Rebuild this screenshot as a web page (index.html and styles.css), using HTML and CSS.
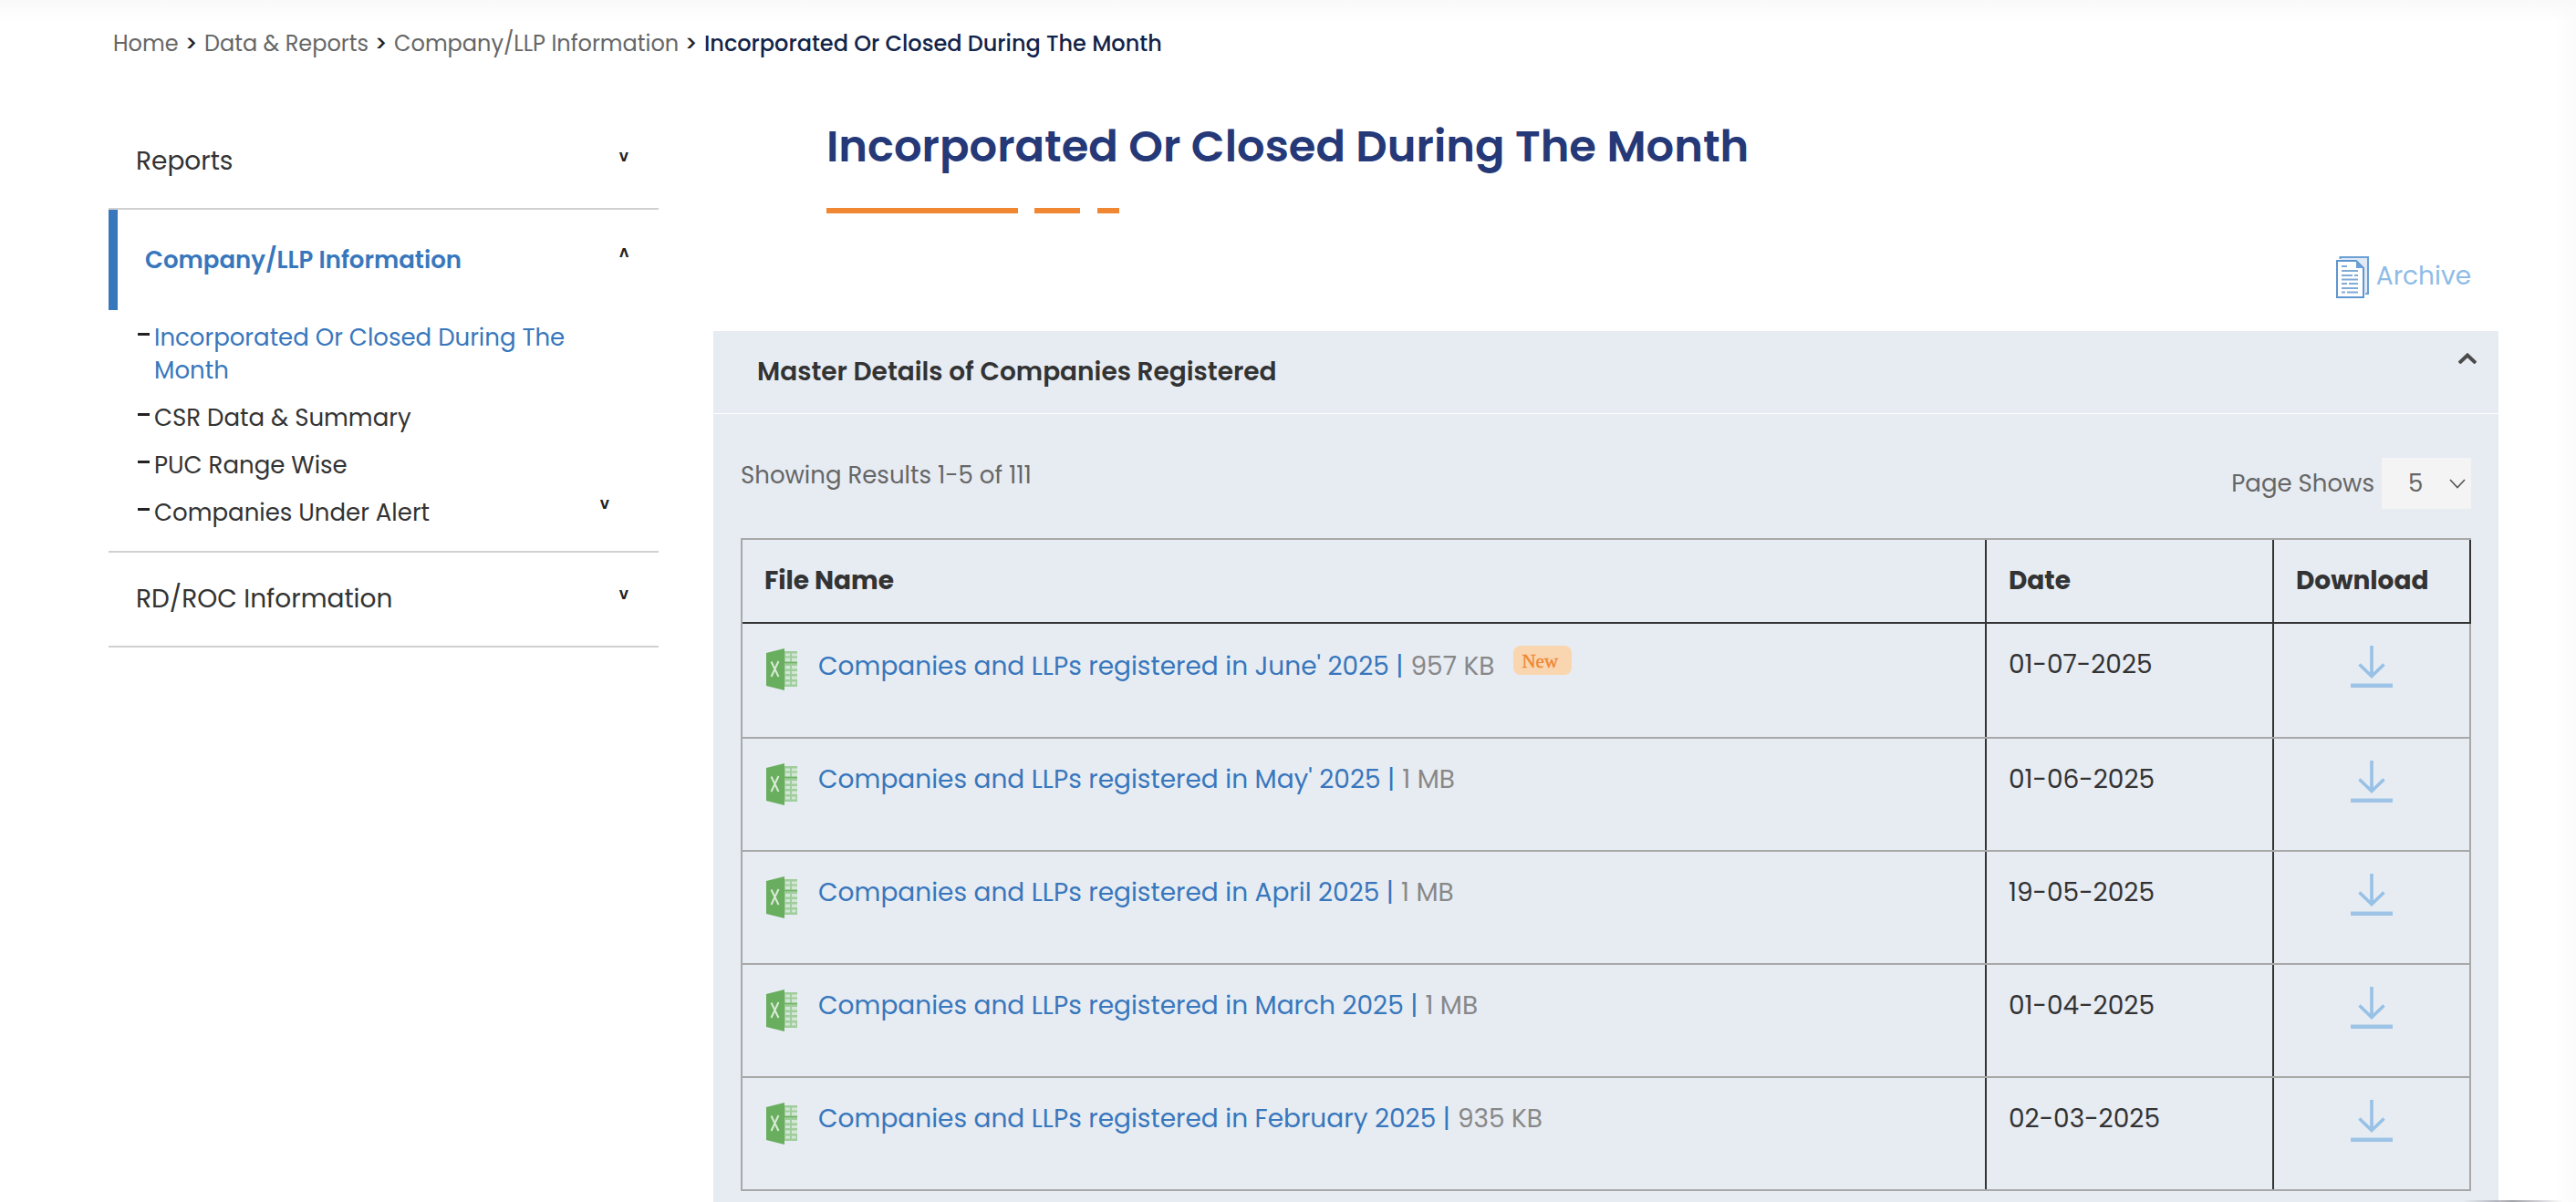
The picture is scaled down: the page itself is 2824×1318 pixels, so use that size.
FILE: index.html
```html
<!DOCTYPE html>
<html lang="en">
<head>
<meta charset="utf-8">
<title>Incorporated Or Closed During The Month</title>
<link rel="stylesheet" href="styles.css">
</head>
<body>
<svg class="sprite" width="0" height="0" aria-hidden="true">
  <symbol id="excel" viewBox="0 0 34 48">
    <path d="M20 4H34V43H20Z" fill="#9fcd9b"/>
    <path d="M21 6.500h5v3h-5zM28 6.500h6v3h-6zM21 11.500h5v4h-5zM28 11.500h6v4h-6zM21 20h5v3.500h-5zM28 20h6v3.500h-6zM21 26h5v3h-5zM28 26h6v3h-6zM21 31.500h5v3.500h-5zM28 31.500h6v3.500h-6zM21 37.500h5v3h-5zM28 37.500h4.500v3H28z" fill="#d3e5d6"/>
    <path d="M20 16.500H34" stroke="#6fb165" stroke-width="1.500"/>
    <path d="M0 6L20 1V47L0 42Z" fill="#69ae5e"/>
    <path d="M5.500 15.500L13.500 32M13.500 15L5.500 32" stroke="#d9ead8" stroke-width="2" fill="none"/>
  </symbol>
  <symbol id="download" viewBox="0 0 46 46">
    <path d="M23 0V34M9.500 20.500L23 33.500L36.500 20.500" stroke="#98c1e6" stroke-width="3.600" fill="none"/>
    <path d="M0 43.800H46" stroke="#9dc3e6" stroke-width="4.400"/>
  </symbol>
</svg>
<nav class="breadcrumb">
  <a class="bc-home">Home</a><i>&gt;</i><a class="bc-data">Data &amp; Reports</a><i>&gt;</i><a class="bc-company">Company/LLP Information</a><i>&gt;</i><strong>Incorporated Or Closed During The Month</strong>
</nav>
<div class="layout">
  <aside class="sidebar">
    <div class="group reports"><span>Reports</span><b class="caret">v</b></div>
    <div class="group active"><span>Company/LLP Information</span><b class="caret up">v</b></div>
    <ul class="submenu">
      <li class="current"><span>Incorporated Or Closed During The Month</span></li>
      <li><span>CSR Data &amp; Summary</span></li>
      <li><span>PUC Range Wise</span></li>
      <li><span>Companies Under Alert</span><b class="caret">v</b></li>
    </ul>
    <div class="group rd"><span>RD/ROC Information</span><b class="caret">v</b></div>
  </aside>
  <main class="content">
    <h1>Incorporated Or Closed During The Month</h1>
    <div class="rule"><i></i><i></i><i></i></div>
    <div class="archive">
      <svg width="36" height="46" viewBox="0 0 36 46">
        <path d="M4.500 3V1H35V41H32" stroke="#6c9fd3" stroke-width="2" fill="#dfeaf6"/>
        <path d="M1 5H22L30 13V45H1Z" stroke="#5f96ce" stroke-width="2" fill="#fff"/>
        <path d="M22 5V13H30Z" fill="#6c9fd3"/>
        <path d="M6 11H12M6 16H24M6 21H18M20 21H24M6 25.500H24M6 30H12M14 30H24M6 35H24M6 39.500H10M12 39.500H24" stroke="#82aad7" stroke-width="2.200"/>
      </svg>
      <span>Archive</span>
    </div>
    <section class="panel">
      <header class="panel-head">
        <h2>Master Details of Companies Registered</h2>
        <svg width="20" height="12" viewBox="0 0 20 12"><path d="M1 11L10 2.500L19 11" stroke="#4b4b4b" stroke-width="4" fill="none"/></svg>
      </header>
      <div class="toolbar">
        <span class="results">Showing Results 1-5 of 111</span>
        <label class="pager"><span>Page Shows</span>
          <span class="select">5<svg width="18" height="11" viewBox="0 0 18 11"><path d="M1 1L9 9.500L17 1" stroke="#555" stroke-width="1.600" fill="none"/></svg></span>
        </label>
      </div>
      <div class="table">
        <div class="row head"><div><span>File Name</span></div><div><span>Date</span></div><div><span>Download</span></div></div>
        <div class="row first"><div><svg class="xls"><use href="#excel"/></svg><a>Companies and LLPs registered in June' 2025 |</a><em>957 KB</em><mark>New</mark></div><div><time>01-07-2025</time></div><div><svg class="dl"><use href="#download"/></svg></div></div>
        <div class="row"><div><svg class="xls"><use href="#excel"/></svg><a>Companies and LLPs registered in May' 2025 |</a><em>1 MB</em></div><div><time>01-06-2025</time></div><div><svg class="dl"><use href="#download"/></svg></div></div>
        <div class="row"><div><svg class="xls"><use href="#excel"/></svg><a>Companies and LLPs registered in April 2025 |</a><em>1 MB</em></div><div><time>19-05-2025</time></div><div><svg class="dl"><use href="#download"/></svg></div></div>
        <div class="row"><div><svg class="xls"><use href="#excel"/></svg><a>Companies and LLPs registered in March 2025 |</a><em>1 MB</em></div><div><time>01-04-2025</time></div><div><svg class="dl"><use href="#download"/></svg></div></div>
        <div class="row"><div><svg class="xls"><use href="#excel"/></svg><a>Companies and LLPs registered in February 2025 |</a><em>935 KB</em></div><div><time>02-03-2025</time></div><div><svg class="dl"><use href="#download"/></svg></div></div>
      </div>
    </section>
  </main>
</div>
<div class="edge-shadow"></div>
</body>
</html>
```
FILE: styles.css
```css
* { box-sizing: border-box; }
body {
  margin: 0;
  height: 1318px;
  overflow: hidden;
  position: relative;
  font-family: Poppins, Inter, sans-serif;
  color: #333;
  background:
    linear-gradient(#f9f9f9, rgba(255, 255, 255, 0) 24px),
    linear-gradient(to left, #fbfbfb, #fff 24px);
}
.sprite { position: absolute; }
h1, h2, ul { margin: 0; padding: 0; }
i, em { font-style: normal; }
span, a, h1, h2, em, time, strong { white-space: nowrap; }

.breadcrumb {
  display: flex;
  height: 94px;
  padding: 28px 0 0 124px;
  font-size: 24px;
  line-height: 40px;
  color: #666;
}
.breadcrumb a { flex: none; }
.breadcrumb i { width: 29px; text-align: center; font-size: 24px; font-weight: 500; line-height: 39px; color: #222; }
.breadcrumb strong { font-weight: 500; color: #12244a; }
.bc-home { width: 71px; }
.bc-data { width: 179px; }
.bc-company { width: 311px; }

.layout { display: flex; align-items: flex-start; }
.sidebar { width: 603px; margin-left: 119px; flex: none; }
.group {
  display: flex;
  justify-content: space-between;
  padding: 0 33px 0 30px;
  font-size: 28px;
  line-height: 40px;
  border-bottom: 2px solid #d0d0d0;
}
.reports { height: 136px; padding-top: 63px; }
.active {
  height: 110px;
  padding-top: 35px;
  border-bottom: 0;
  border-left: 10px solid #3877bc;
  font-size: 26px;
  font-weight: 600;
  color: #3877bc;
}
.caret { font-size: 17px; font-weight: 600; line-height: 20px; margin-top: 4px; color: #222; }
.active .caret { margin-top: 3px; height: 20px; }
.up { transform: rotate(180deg); }
.submenu {
  list-style: none;
  padding: 12px 54px 11px 50px;
  border-bottom: 2px solid #d0d0d0;
  height: 266px;
}
.submenu li {
  display: flex;
  position: relative;
  justify-content: space-between;
  margin-bottom: 16px;
  font-size: 26px;
  line-height: 36px;
}
.submenu li::before {
  content: "";
  position: absolute;
  left: -18px;
  top: 13px;
  width: 13px;
  height: 3px;
  background: #222;
}
.submenu .current span { width: 462px; white-space: normal; color: #3877bc; }
.submenu .caret { margin-top: -2px; }
.rd { height: 104px; padding-top: 31px; }
.rd .caret { margin-top: 4px; }

.content { width: 1957px; margin-left: 60px; }
h1 {
  height: 134px;
  padding: 38px 0 0 124px;
  font-size: 48px;
  line-height: 58px;
  font-weight: 600;
  color: #253978;
}
.rule { display: flex; height: 6px; margin-left: 124px; }
.rule i { background: #f08833; width: 210px; margin-right: 18px; }
.rule i + i { width: 50px; margin-right: 19px; }
.rule i + i + i { width: 24px; }
.archive {
  display: flex;
  justify-content: flex-end;
  gap: 8px;
  height: 129px;
  padding: 47px 30px 0 0;
  font-size: 28px;
  line-height: 44px;
  color: #8fbce6;
}

.panel { height: 960px; background: #e7ecf3; }
.panel-head {
  display: flex;
  justify-content: space-between;
  height: 91px;
  padding: 24px 24px 0 48px;
  border-bottom: 1px solid #fff;
}
h2 { font-size: 28px; line-height: 42px; font-weight: 600; }
.toolbar {
  display: flex;
  justify-content: space-between;
  height: 136px;
  padding: 48px 30px 0;
  font-size: 26px;
  color: #666;
}
.results { line-height: 39px; }
.pager { display: flex; gap: 8px; height: 56px; line-height: 57px; }
.select {
  display: flex;
  align-items: center;
  justify-content: space-between;
  width: 98px;
  padding: 0 6px 0 29px;
  background: #f4f4f4;
}

.table { margin: 0 30px; border: 2px solid #a8a8a8; border-width: 2px 0 0 2px; }
.row { display: grid; grid-template-columns: 1364px 315px 216px; height: 124px; font-size: 28px; }
.row > div { display: flex; padding: 24px 0 0 24px; line-height: 42px; border-bottom: 2px solid #a8a8a8; }
.row > div:not(:last-child) { box-shadow: inset -2px 0 #333; }
.row > div:last-child { border-right: 2px solid #a8a8a8; }
.row > div:nth-child(3):not(.head *) { padding-left: 84px; }
.head { height: 92px; font-weight: 700; }
.head > div, .head > div:last-child { border-color: #333; }
.row.first { height: 126px; }
.xls { width: 34px; height: 48px; margin: 2px 23px 0 2px; flex: none; }
.dl { width: 46px; height: 46px; }
.row a { color: #3877bc; margin-right: 8px; }
.row em { color: #888; }
.first a, .first em { line-height: 46px; }
mark {
  width: 64px;
  height: 32px;
  margin: 0 0 0 21px;
  padding-left: 9px;
  border-radius: 8px;
  background: #f9d6b0;
  color: #f08833;
  font: 500 21px/34px "Liberation Serif", serif;
  -webkit-text-stroke: .4px #f08833;
}

.edge-shadow {
  position: absolute;
  right: 14px;
  bottom: 0;
  width: 110px;
  height: 2px;
  background: linear-gradient(to right, rgba(120, 120, 130, 0), rgba(120, 120, 130, .7) 50%, rgba(120, 120, 130, 0));
}
```
